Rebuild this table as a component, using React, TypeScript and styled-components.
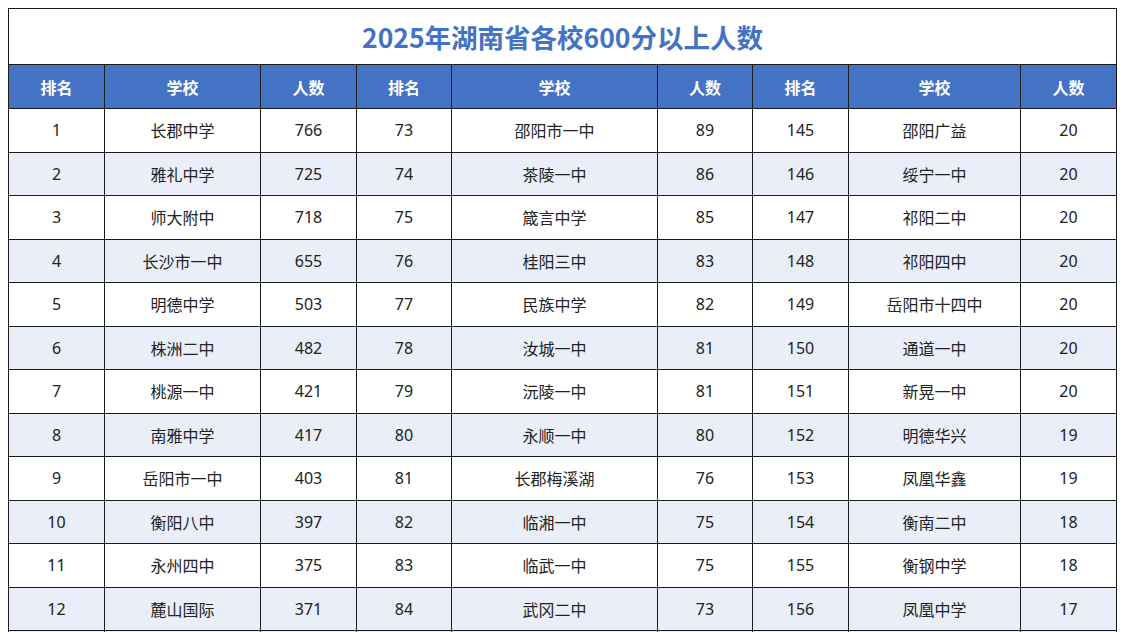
import React from 'react'
import styled, { createGlobalStyle } from 'styled-components'

const GlobalStyle = createGlobalStyle`
    html, body {
        margin: 0;
        padding: 0;
        background: #ffffff;
    }
    body {
        font-family: "Noto Sans", "Noto Sans CJK SC", sans-serif;
        overflow: hidden;
    }
`

const Page = styled.div`
    padding: 8px 0 0 8px;
`

const Table = styled.table`
    width: 1109px;
    border-collapse: collapse;
    table-layout: fixed;
    border: 1px solid #1a1a1a;
`

const TitleCell = styled.th`
    height: 55px;
    padding: 0;
    background: #ffffff;
    color: #4472c4;
    font-family: "Noto Sans CJK SC", sans-serif;
    font-size: 26.5px;
    font-weight: 700;
    text-align: center;
    vertical-align: middle;
    border: 1px solid #1a1a1a;
`

const HeadCell = styled.th`
    height: 43px;
    padding: 0;
    background: #4472c4;
    color: #ffffff;
    font-family: "Noto Sans CJK SC", sans-serif;
    font-size: 16px;
    font-weight: 700;
    text-align: center;
    border: 1px solid #1a1a1a;
`

const Row = styled.tr<{ $shaded: boolean }>`
    height: 43.5px;
    background: ${({ $shaded }) => ($shaded ? '#e9eef8' : '#ffffff')};
`

const Cell = styled.td`
    padding: 0;
    text-align: center;
    vertical-align: middle;
    font-size: 16px;
    color: #222222;
    border: 1px solid #1a1a1a;
`

type Entry = [number, string, number]

const groups: Entry[][] = [
    [
        [1, '长郡中学', 766],
        [2, '雅礼中学', 725],
        [3, '师大附中', 718],
        [4, '长沙市一中', 655],
        [5, '明德中学', 503],
        [6, '株洲二中', 482],
        [7, '桃源一中', 421],
        [8, '南雅中学', 417],
        [9, '岳阳市一中', 403],
        [10, '衡阳八中', 397],
        [11, '永州四中', 375],
        [12, '麓山国际', 371],
    ],
    [
        [73, '邵阳市一中', 89],
        [74, '茶陵一中', 86],
        [75, '箴言中学', 85],
        [76, '桂阳三中', 83],
        [77, '民族中学', 82],
        [78, '汝城一中', 81],
        [79, '沅陵一中', 81],
        [80, '永顺一中', 80],
        [81, '长郡梅溪湖', 76],
        [82, '临湘一中', 75],
        [83, '临武一中', 75],
        [84, '武冈二中', 73],
    ],
    [
        [145, '邵阳广益', 20],
        [146, '绥宁一中', 20],
        [147, '祁阳二中', 20],
        [148, '祁阳四中', 20],
        [149, '岳阳市十四中', 20],
        [150, '通道一中', 20],
        [151, '新晃一中', 20],
        [152, '明德华兴', 19],
        [153, '凤凰华鑫', 19],
        [154, '衡南二中', 18],
        [155, '衡钢中学', 18],
        [156, '凤凰中学', 17],
    ],
]

const widths = [96, 156, 96, 95, 206, 95, 96, 172, 96]
const heads = ['排名', '学校', '人数']

export default function App() {
    return (
        <>
            <GlobalStyle />
            <Page>
                <Table>
                    <colgroup>
                        {widths.map((w, i) => (
                            <col key={i} style={{ width: w }} />
                        ))}
                    </colgroup>
                    <thead>
                        <tr>
                            <TitleCell colSpan={9}>2025年湖南省各校600分以上人数</TitleCell>
                        </tr>
                        <tr>
                            {groups.map((_, g) =>
                                heads.map((h) => <HeadCell key={`${g}-${h}`}>{h}</HeadCell>)
                            )}
                        </tr>
                    </thead>
                    <tbody>
                        {groups[0].map((_, r) => (
                            <Row key={r} $shaded={r % 2 === 1}>
                                {groups.map((grp, g) => (
                                    <React.Fragment key={g}>
                                        <Cell>{grp[r][0]}</Cell>
                                        <Cell>{grp[r][1]}</Cell>
                                        <Cell>{grp[r][2]}</Cell>
                                    </React.Fragment>
                                ))}
                            </Row>
                        ))}
                        <Row $shaded={true}>
                            {widths.map((_, i) => (
                                <Cell key={i} />
                            ))}
                        </Row>
                    </tbody>
                </Table>
            </Page>
        </>
    )
}
